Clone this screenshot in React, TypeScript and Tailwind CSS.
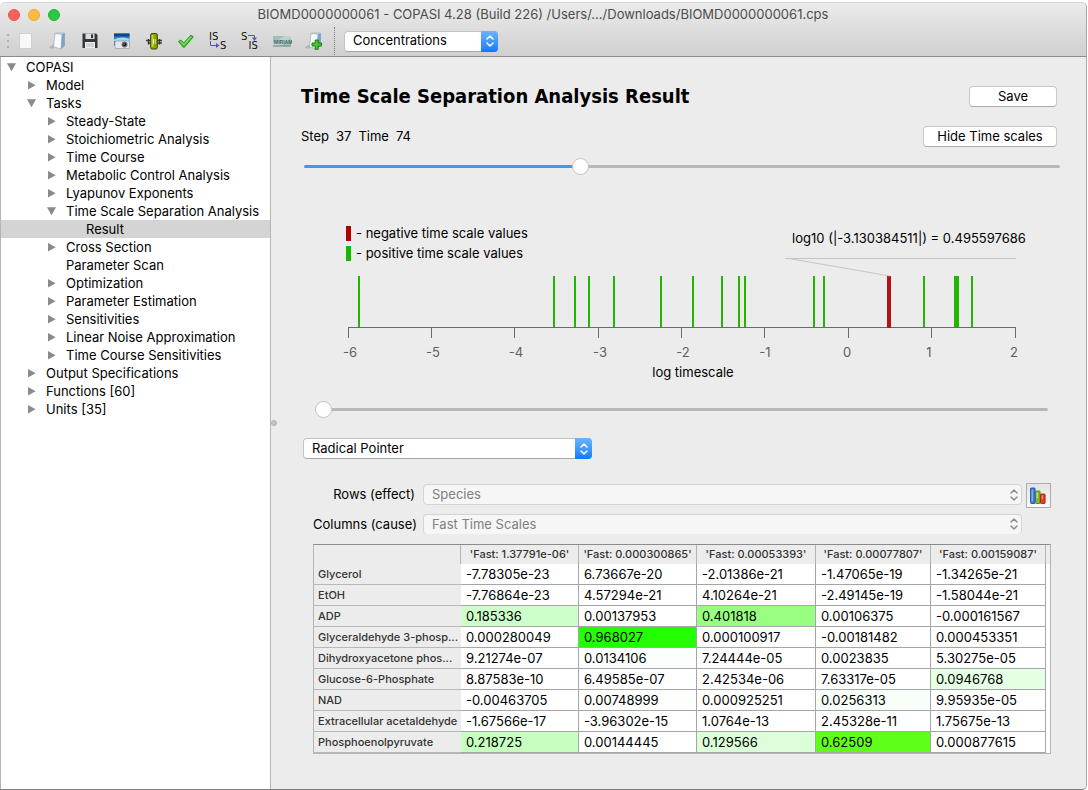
import React from "react";

type TreeNode = { label: string; level: number; state?: "open" | "closed"; selected?: boolean };

const TREE: TreeNode[] = [
  { label: "COPASI", level: 0, state: "open" },
  { label: "Model", level: 1, state: "closed" },
  { label: "Tasks", level: 1, state: "open" },
  { label: "Steady-State", level: 2, state: "closed" },
  { label: "Stoichiometric Analysis", level: 2, state: "closed" },
  { label: "Time Course", level: 2, state: "closed" },
  { label: "Metabolic Control Analysis", level: 2, state: "closed" },
  { label: "Lyapunov Exponents", level: 2, state: "closed" },
  { label: "Time Scale Separation Analysis", level: 2, state: "open" },
  { label: "Result", level: 3, selected: true },
  { label: "Cross Section", level: 2, state: "closed" },
  { label: "Parameter Scan", level: 2 },
  { label: "Optimization", level: 2, state: "closed" },
  { label: "Parameter Estimation", level: 2, state: "closed" },
  { label: "Sensitivities", level: 2, state: "closed" },
  { label: "Linear Noise Approximation", level: 2, state: "closed" },
  { label: "Time Course Sensitivities", level: 2, state: "closed" },
  { label: "Output Specifications", level: 1, state: "closed" },
  { label: "Functions [60]", level: 1, state: "closed" },
  { label: "Units [35]", level: 1, state: "closed" },
];

const INDENT = ["pl-[6px]", "pl-[26px]", "pl-[46px]", "pl-[66px]"];

const COLUMNS = [
  { label: "'Fast: 1.37791e-06'", width: "w-[118px]" },
  { label: "'Fast: 0.000300865'", width: "w-[118px]" },
  { label: "'Fast: 0.00053393'", width: "w-[119px]" },
  { label: "'Fast: 0.00077807'", width: "w-[115px]" },
  { label: "'Fast: 0.00159087'", width: "w-[115px]" },
];

const ROWS: { name: string; values: string[] }[] = [
  { name: "Glycerol", values: ["-7.78305e-23", "6.73667e-20", "-2.01386e-21", "-1.47065e-19", "-1.34265e-21"] },
  { name: "EtOH", values: ["-7.76864e-23", "4.57294e-21", "4.10264e-21", "-2.49145e-19", "-1.58044e-21"] },
  { name: "ADP", values: ["0.185336", "0.00137953", "0.401818", "0.00106375", "-0.000161567"] },
  { name: "Glyceraldehyde 3-phosp...", values: ["0.000280049", "0.968027", "0.000100917", "-0.00181482", "0.000453351"] },
  { name: "Dihydroxyacetone phos...", values: ["9.21274e-07", "0.0134106", "7.24444e-05", "0.0023835", "5.30275e-05"] },
  { name: "Glucose-6-Phosphate", values: ["8.87583e-10", "6.49585e-07", "2.42534e-06", "7.63317e-05", "0.0946768"] },
  { name: "NAD", values: ["-0.00463705", "0.00748999", "0.000925251", "0.0256313", "9.95935e-05"] },
  { name: "Extracellular acetaldehyde", values: ["-1.67566e-17", "-3.96302e-15", "1.0764e-13", "2.45328e-11", "1.75675e-13"] },
  { name: "Phosphoenolpyruvate", values: ["0.218725", "0.00144445", "0.129566", "0.62509", "0.000877615"] },
];

const CELL_COLORS: Record<string, string> = {
  "0.185336": "bg-[#ceffca]",
  "0.401818": "bg-[#98ff82]",
  "0.968027": "bg-[#22ff00]",
  "0.0134106": "bg-[#fbfffb]",
  "0.00748999": "bg-[#fdfffd]",
  "0.0946768": "bg-[#e5ffe4]",
  "0.0256313": "bg-[#f8fff8]",
  "0.218725": "bg-[#c6ffbf]",
  "0.129566": "bg-[#dcffda]",
  "0.62509": "bg-[#5eff19]",
};

function Disclosure({ open }: { open: boolean }) {
  return (
    <svg viewBox="0 0 10 10" className="size-[10px] shrink-0" aria-hidden="true">
      <path d={open ? "M0 1.2H9L4.5 9.2Z" : "M1 1L8.6 5.2L1 9.4Z"} fill="#8a8a8a" />
    </svg>
  );
}

function Chevrons({ className }: { className: string }) {
  return (
    <svg viewBox="0 0 10 14" className={className} fill="none" stroke="currentColor" strokeWidth="1.5" strokeLinecap="round" strokeLinejoin="round" aria-hidden="true">
      <path d="M2 5L5 2L8 5M2 9L5 12L8 9" />
    </svg>
  );
}

function PopupSelect({ id, label, value, width }: { id: string; label: string; value: string; width: string }) {
  return (
    <div className={`relative flex h-[21px] ${width}`}>
      <select id={id} aria-label={label} className="h-full w-full appearance-none rounded-[4px] border border-[#c4c4c4] border-b-[#a8a8a8] bg-white pr-6 pb-px pl-2 text-[13px] leading-[17px] text-black">
        <option>{value}</option>
      </select>
      <span className="pointer-events-none absolute inset-y-0 right-0 flex w-[17px] items-center justify-center rounded-r-[4px] bg-linear-to-b from-[#6cb3fa] to-[#067aff] text-white">
        <Chevrons className="h-[14px] w-[10px]" />
      </span>
    </div>
  );
}

function DisabledSelect({ id, value, edge }: { id: string; value: string; edge: string }) {
  return (
    <div className="relative flex min-w-0 flex-1">
      <select id={id} disabled className={`w-full appearance-none border-[#d4d4d4] bg-[#f6f6f6] pr-6 pb-px pl-2 text-[13px] leading-[17px] text-[#808080] opacity-100 ${edge}`}>
        <option>{value}</option>
      </select>
      <span className="pointer-events-none absolute inset-y-0 right-0 flex w-[17px] items-center justify-center text-[#8c8c8c]">
        <Chevrons className="h-[14px] w-[10px]" />
      </span>
    </div>
  );
}

const svgProps = { viewBox: "0 0 20 20", className: "size-5", "aria-hidden": true } as const;

const NewIcon = () => (
  <svg {...svgProps}>
    <rect x="3.5" y="2.5" width="12" height="15" fill="#f8f8f8" stroke="#cfcfcf" />
  </svg>
);

const Folder = () => (
  <>
    <path d="M1 16.5L6 13V17.5H3Z" fill="#9b9b9b" opacity="0.6" />
    <path d="M7 2H16.5V14.5L13 18V4H7Z" fill="#c3d6e8" stroke="#8fa3b5" strokeWidth="0.5" />
    <path d="M7 2.6L14 3.2L13 18L5.5 15.8Z" fill="#f8fafc" stroke="#a4adb6" strokeWidth="0.7" />
    <path d="M14 3.2L16.8 2V14.5L13.2 18Z" fill="#7ea3c6" />
  </>
);

const OpenIcon = () => (
  <svg {...svgProps}>
    <Folder />
  </svg>
);

const SaveIcon = () => (
  <svg {...svgProps}>
    <path d="M2.5 2.5H16L17.5 4V17H2.5Z" fill="#34373d" />
    <rect x="5.5" y="2.5" width="9" height="5.5" fill="#d9dde2" />
    <rect x="11" y="3.3" width="2" height="3.8" fill="#34373d" />
    <rect x="5" y="11" width="10" height="6" fill="#eef0f2" />
    <path d="M6 13H14M6 15H14" stroke="#b7babf" />
  </svg>
);

const SnapshotIcon = () => (
  <svg {...svgProps}>
    <rect x="2" y="2.5" width="15.5" height="12" fill="#2f7fc2" />
    <rect x="2" y="2.5" width="15.5" height="3" fill="#0b4a88" />
    <path d="M2 8.5Q9 5 17.5 8V10H2Z" fill="#a9d6f4" />
    <rect x="3" y="10" width="14.5" height="7.5" rx="1" fill="#e4e6e8" stroke="#8c9197" strokeWidth="0.6" />
    <circle cx="12.5" cy="13.5" r="3" fill="#6a7078" />
    <circle cx="12.5" cy="13.5" r="1.8" fill="#14181d" />
    <circle cx="12" cy="13" r="0.6" fill="#ffffff" />
  </svg>
);

const SliderIcon = () => (
  <svg {...svgProps}>
    <path d="M2 9.5H18M4 12H18" stroke="#444444" strokeWidth="1.4" />
    <path d="M4.5 8V13.5M15.5 8V13.5" stroke="#333333" strokeWidth="1.4" />
    <rect x="6.7" y="2.5" width="6.6" height="15.5" rx="1.5" fill="#8fa300" stroke="#384200" />
    <rect x="7.5" y="4" width="2" height="12" fill="#c1d72e" />
    <path d="M9.5 8V13M11.2 8V13" stroke="#f5ffc0" strokeWidth="0.8" />
  </svg>
);

const CheckIcon = () => (
  <svg {...svgProps}>
    <path d="M2.5 10.5L4.8 9L7.8 12L14.8 4.2L17.3 5.8L8.4 16.3L7.4 16.3Z" fill="#49c92f" stroke="#1f8a17" strokeWidth="0.9" strokeLinejoin="round" />
    <path d="M4.5 10.4L7.9 13.6L15.2 5.4" stroke="#a4f08c" strokeWidth="0.8" fill="none" />
  </svg>
);

const IsToSIcon = () => (
  <svg {...svgProps}>
    <text x="1" y="9" fontFamily="DejaVu Sans, sans-serif" fontSize="10" fill="#111111">IS</text>
    <text x="12" y="18" fontFamily="DejaVu Sans, sans-serif" fontSize="10" fill="#111111">S</text>
    <path d="M2.5 10V14.5H9.5" fill="none" stroke="#5656b8" />
    <path d="M8 12L11.5 14.5L8 17Z" fill="#5656b8" />
  </svg>
);

const SToIsIcon = () => (
  <svg {...svgProps}>
    <text x="1" y="8.5" fontFamily="DejaVu Sans, sans-serif" fontSize="10" fill="#111111">S</text>
    <text x="8.5" y="18" fontFamily="DejaVu Sans, sans-serif" fontSize="10" fill="#111111">IS</text>
    <path d="M8 4.5H14.5V8" fill="none" stroke="#5656b8" />
    <path d="M12 6.5H17L14.5 10Z" fill="#5656b8" />
  </svg>
);

const MiriamIcon = () => (
  <svg {...svgProps}>
    <rect x="1" y="5" width="18" height="10.5" fill="#a3bdb8" />
    <path d="M1 12L13 5H19V7L9 15.5H1Z" fill="#bfd2cd" />
    <path d="M1 15H19" stroke="#6f8d8b" />
    <text x="2" y="13" fontFamily="Liberation Sans, sans-serif" fontSize="5" fontWeight="bold" fill="#3d6666">MIRIAM</text>
  </svg>
);

const ImportIcon = () => (
  <svg {...svgProps}>
    <Folder />
    <path d="M11.2 9H14.2V12H17.5V15H14.2V18.3H11.2V15H8V12H11.2Z" fill="#44c92a" stroke="#12720c" strokeWidth="0.9" />
  </svg>
);

const BarsIcon = () => (
  <svg viewBox="0 0 18 18" className="size-[18px]" aria-hidden="true">
    <rect x="0.5" y="1" width="4.6" height="15.5" rx="0.8" fill="#3f7fe0" stroke="#1b3f94" strokeWidth="0.8" />
    <path d="M2.2 2.5V14" stroke="#9dc3f8" />
    <rect x="5.5" y="4" width="4.6" height="12.5" rx="0.8" fill="#86b53a" stroke="#4a7410" strokeWidth="0.8" />
    <path d="M7.2 5.5V11" stroke="#d4eca0" />
    <rect x="10.5" y="7" width="4.6" height="9.5" rx="0.8" fill="#e2431a" stroke="#991405" strokeWidth="0.8" />
    <path d="M12.2 8.5V12" stroke="#ffb08a" />
  </svg>
);

const TOOLS = [
  { label: "New", Icon: NewIcon },
  { label: "Open", Icon: OpenIcon },
  { label: "Save file", Icon: SaveIcon },
  { label: "Capture", Icon: SnapshotIcon },
  { label: "Sliders", Icon: SliderIcon },
  { label: "Check model", Icon: CheckIcon },
  { label: "Initial state to state", Icon: IsToSIcon },
  { label: "State to initial state", Icon: SToIsIcon },
  { label: "MIRIAM", Icon: MiriamIcon },
  { label: "Add file", Icon: ImportIcon },
];

const TICKS = [
  { x: 46, lx: 48, t: "-6" },
  { x: 129, lx: 131, t: "-5" },
  { x: 212, lx: 214, t: "-4" },
  { x: 296, lx: 298, t: "-3" },
  { x: 379, lx: 381, t: "-2" },
  { x: 462, lx: 463, t: "-1" },
  { x: 546, lx: 545, t: "0" },
  { x: 629, lx: 627, t: "1" },
  { x: 713, lx: 712, t: "2" },
];

const POSITIVE = [56, 251, 272, 286, 311, 358, 390, 419, 436, 442, 511, 521, 621, 669];

function TimeScaleChart() {
  return (
    <svg viewBox="0 0 755 205" className="block h-auto w-full" fontFamily="Inter, sans-serif" fontSize="13" role="img" aria-label="log timescale">
      <rect x="44" y="41" width="5" height="15" fill="#b20000" />
      <text x="54" y="53">- negative time scale values</text>
      <rect x="44" y="61" width="5" height="15" fill="#15b800" />
      <text x="54" y="73">- positive time scale values</text>
      {POSITIVE.map((x) => (
        <rect key={x} x={x} y="91" width="2" height="51" fill="#22b600" />
      ))}
      <rect x="652" y="91" width="5" height="51" fill="#22b600" />
      <path d="M46 142.5H714" stroke="#6a6a6a" />
      {TICKS.map(({ x, lx, t }) => (
        <g key={t}>
          <path d={`M${x + 0.5} 142V153`} stroke="#6a6a6a" />
          <text x={lx} y="172" textAnchor="middle" fill="#606060">{t}</text>
        </g>
      ))}
      <rect x="585" y="91" width="4" height="52" fill="#b51212" />
      <path d="M483 73.5H714M487 73.5L588 91" stroke="#c6c6c6" fill="none" />
      <text x="607" y="58" textAnchor="middle">log10 (|-3.130384511|) = 0.495597686</text>
      <text x="391" y="192" textAnchor="middle">log timescale</text>
    </svg>
  );
}

const SLIDER =
  "block h-[17px] w-full appearance-none bg-transparent [&::-webkit-slider-runnable-track]:h-[3px] [&::-webkit-slider-runnable-track]:rounded-full [&::-webkit-slider-thumb]:-mt-[7px] [&::-webkit-slider-thumb]:size-[17px] [&::-webkit-slider-thumb]:appearance-none [&::-webkit-slider-thumb]:rounded-full [&::-webkit-slider-thumb]:border [&::-webkit-slider-thumb]:border-[#c2c2c2] [&::-webkit-slider-thumb]:bg-white";

const BUTTON =
  "h-[21px] rounded-[4px] border border-[#c8c8c8] border-b-[#ababab] bg-white text-center text-[13px] leading-[19px] text-black";

export default function App() {
  return (
    <div className="flex min-h-screen flex-col bg-white pt-[2px] pr-px font-['Inter',sans-serif] text-[13px] text-black">
      <div className="flex flex-1 flex-col overflow-hidden rounded-t-[5px] rounded-br-[5px] border-t border-r border-b border-t-[#d8d8d8] border-r-[#a8a8a8] border-b-[#7d7d7d] bg-[#ececec]">
        <header className="border-b border-[#8a8a8a] bg-linear-to-b from-[#ebebeb] to-[#d0d0d0]">
          <div className="flex h-[23px] items-center">
            <div className="flex w-[68px] gap-2 pl-2">
              <button aria-label="Close" className="size-3 rounded-full border border-[#e9524a] bg-[#fc605b]" />
              <button aria-label="Minimize" className="size-3 rounded-full border border-[#e5a935] bg-[#fdbc40]" />
              <button aria-label="Zoom" className="size-3 rounded-full border border-[#1eb32f] bg-[#27ca40]" />
            </div>
            <h1 className="flex-1 pr-[68px] text-center text-[13px] leading-[23px] text-[#4d4d4d]">
              BIOMD0000000061 - COPASI 4.28 (Build 226) /Users/.../Downloads/BIOMD0000000061.cps
            </h1>
          </div>
          <div className="flex h-[30px] items-center">
            <div className="flex w-[10px] flex-col items-end gap-1 pr-px">
              <span className="size-0.5 rounded-full bg-[#a2a2a2]" />
              <span className="size-0.5 rounded-full bg-[#a2a2a2]" />
              <span className="size-0.5 rounded-full bg-[#a2a2a2]" />
            </div>
            {TOOLS.map(({ label, Icon }) => (
              <button key={label} aria-label={label} className="flex h-7 w-8 items-center justify-center">
                <Icon />
              </button>
            ))}
            <span className="mr-[9px] ml-1 h-[28px] border-l border-dotted border-[#7c7c7c]" />
            <PopupSelect id="quantity" label="Quantity" value="Concentrations" width="w-[154px]" />
          </div>
        </header>

        <div className="flex flex-1">
          <nav className="w-[271px] shrink-0 border-r border-l border-[#b4b4b4] bg-white pt-px" aria-label="Model tree">
            <ul>
              {TREE.map((n) => (
                <li key={n.label} className={n.selected ? "bg-[#d4d4d4]" : ""}>
                  <button aria-current={n.selected} className={`flex h-[18px] w-full items-center text-left leading-[18px] ${INDENT[n.level]}`}>
                    <span className="w-[19px] shrink-0">{n.state && <Disclosure open={n.state === "open"} />}</span>
                    <span className="whitespace-nowrap">{n.label}</span>
                  </button>
                </li>
              ))}
            </ul>
          </nav>
          <div className="flex w-[6px] shrink-0 items-center">
            <span className="size-[6px] rounded-full border border-[#b0b0b0] bg-[#c4c4c4]" />
          </div>

          <main className="min-w-0 flex-1 pt-[29px] pr-[29px] pl-6">
            <div className="flex h-[21px] items-center justify-between">
              <h2 className="font-['DejaVu_Sans_Condensed','DejaVu_Sans',sans-serif] text-[20px] leading-[21px] font-bold">Time Scale Separation Analysis Result</h2>
              <button className={`w-[88px] ${BUTTON}`}>Save</button>
            </div>
            <div className="mt-[19px] flex h-[21px] items-center justify-between">
              <p className="flex gap-[7px] leading-[21px]">
                <span>Step</span>
                <span>37</span>
                <span>Time</span>
                <span>74</span>
              </p>
              <button className={`w-[134px] ${BUTTON}`}>Hide Time scales</button>
            </div>
            <div className="-mr-[3px] pt-[11px] pl-[3px]">
              <input type="range" aria-label="Step" min={0} max={1000} defaultValue={362} className={`${SLIDER} [&::-webkit-slider-runnable-track]:bg-[linear-gradient(to_right,#3b99fc_36.5%,#b8b8b8_36.5%)]`} />
            </div>
            <div className="pt-[10px] pl-px">
              <TimeScaleChart />
            </div>
            <div className="pt-[11px] pr-[9px] pl-[14px]">
              <input type="range" aria-label="Time scale" min={0} max={13} defaultValue={0} className={`${SLIDER} [&::-webkit-slider-runnable-track]:bg-[#b8b8b8]`} />
            </div>
            <div className="pt-5 pl-0.5">
              <PopupSelect id="view" label="View" value="Radical Pointer" width="w-[289px]" />
            </div>

            <section className="pt-6 pr-[6px] pl-3">
              <div className="flex items-start">
                <label htmlFor="rows" className="w-[110px] shrink-0 pr-2 text-right leading-[23px] whitespace-nowrap">Rows (effect)</label>
                <div className="flex min-w-0 flex-1 pt-px">
                  <DisabledSelect id="rows" value="Species" edge="h-[21px] rounded-[4px] border" />
                </div>
                <button aria-label="Show bar chart" className="ml-1 flex size-[25px] items-center justify-center border border-[#adadad] bg-linear-to-b from-[#e4e4e4] to-[#fafafa]">
                  <BarsIcon />
                </button>
              </div>
              <div className="mt-[6px] flex items-start pr-[29px]">
                <label htmlFor="columns" className="w-[110px] shrink-0 pr-2 text-right leading-[21px] whitespace-nowrap">Columns (cause)</label>
                <DisabledSelect id="columns" value="Fast Time Scales" edge="h-5 rounded-[4px] border border-b-0" />
              </div>

              <div className="mt-[9px] border border-t-[#8c8c8c] border-r-[#b4b4b4] border-b-[#b4b4b4] border-l-[#b4b4b4]">
                <table className="w-full table-fixed border-separate border-spacing-0 text-left">
                  <thead>
                    <tr className="h-[19px] text-[11px] leading-[19px] text-[#333333]">
                      <th className="w-[147px] border-r border-[#b4b4b4] p-0" />
                      {COLUMNS.map((c) => (
                        <th key={c.label} scope="col" className={`border-r border-[#b4b4b4] p-0 text-center font-medium whitespace-nowrap ${c.width}`}>
                          {c.label}
                        </th>
                      ))}
                      <th className="p-0" />
                    </tr>
                  </thead>
                  <tbody>
                    {ROWS.map((r) => (
                      <tr key={r.name} className="h-[21px] leading-5">
                        <th scope="row" className="border-b border-[#b8b8b8] p-0 pl-1 text-[11px] font-medium whitespace-nowrap text-[#333333]">
                          {r.name}
                        </th>
                        {r.values.map((v) => (
                          <td key={v} className={`border-r border-b border-[#a6a6a6] p-0 pl-[5px] whitespace-nowrap ${CELL_COLORS[v] ?? "bg-white"}`}>
                            {v}
                          </td>
                        ))}
                        <td className="bg-white p-0" />
                      </tr>
                    ))}
                  </tbody>
                </table>
              </div>
            </section>
          </main>
        </div>
      </div>
    </div>
  );
}
